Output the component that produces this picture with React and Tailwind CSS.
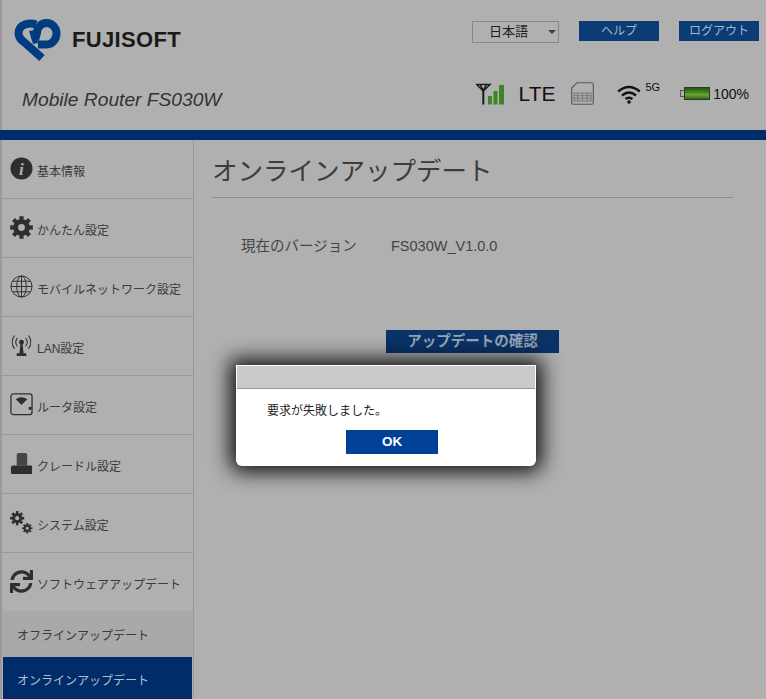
import React from "react";
import { FaSync } from "react-icons/fa";

const I = ({ children, vb = "0 0 24 24", cls = "w-[23px] h-[23px]" }) => (
  <svg viewBox={vb} className={cls + " shrink-0"} fill="#2e2e2e">{children}</svg>
);

const gearPath = (cx, cy, r1, r2, r3, n = 8) => {
  let d = "";
  const step = (Math.PI * 2) / n;
  for (let i = 0; i < n; i++) {
    const a = i * step;
    const w = step * 0.24;
    const p = (ang, r) => `${(cx + Math.cos(ang) * r).toFixed(2)} ${(cy + Math.sin(ang) * r).toFixed(2)}`;
    d += (i === 0 ? "M" : "L") + p(a - w * 1.25, r2) + "L" + p(a - w, r1) + "L" + p(a + w, r1) + "L" + p(a + w * 1.25, r2);
  }
  d += "Z";
  d += `M${cx + r3} ${cy}A${r3} ${r3} 0 1 0 ${cx - r3} ${cy}A${r3} ${r3} 0 1 0 ${cx + r3} ${cy}Z`;
  return d;
};

const icons = {
  info: (
    <I>
      <circle cx="12" cy="12" r="11.500" />
      <text x="12" y="18.500" textAnchor="middle" fontSize="18" fontStyle="italic" fontWeight="700" fontFamily="'Liberation Serif', serif" fill="#b0b0b0">i</text>
    </I>
  ),
  gear: <I><path fillRule="evenodd" d={gearPath(12, 12, 12, 8.800, 3.600)} /></I>,
  globe: (
    <I>
      <g fill="none" stroke="#2e2e2e" strokeWidth="1">
        <circle cx="12" cy="12" r="11" />
        <ellipse cx="12" cy="12" rx="5" ry="11" />
        <path d="M12 1V23M1 12H23M2.800 6.500H21.200M2.800 17.500H21.200" />
      </g>
    </I>
  ),
  antenna: (
    <I>
      <circle cx="12" cy="8.500" r="2.500" />
      <path d="M11 10h2l1.200 10H17v3H7V20h2.800z" />
      <g fill="none" stroke="#2e2e2e" strokeWidth="1.100" strokeLinecap="round">
        <path d="M7.500 4.500a6.500 6.500 0 0 0 0 8M16.500 4.500a6.500 6.500 0 0 1 0 8M4.500 2a11 11 0 0 0 0 13M19.500 2a11 11 0 0 1 0 13" />
      </g>
    </I>
  ),
  router: (
    <I>
      <rect x="1" y="1" width="22" height="21.500" rx="2.500" fill="none" stroke="#2e2e2e" strokeWidth="1.300" />
      <path d="M6 6.500Q12 2.500 18 6.500L12 12.500Z" />
      <rect x="19.500" y="14.500" width="3" height="3" />
    </I>
  ),
  cradle: (
    <I>
      <path d="M7 3Q7 1 9 1H16Q18 1 18 3V14H7Z" fill="#454545" />
      <path d="M3 14H22Q23 14 23 15.500V23H2Q1 23 1 21.500V16.500Q1 14 3 14Z" />
    </I>
  ),
  system: (
    <I>
      <path fillRule="evenodd" d={gearPath(7.500, 7.500, 7.500, 5.300, 2.200)} />
      <path fillRule="evenodd" d={gearPath(18, 18, 5.500, 3.900, 1.600)} />
    </I>
  ),
  refresh: <FaSync className="w-[23px] h-[23px] shrink-0 text-[#2e2e2e]" />,
};

const items = [
  ["info", "基本情報"],
  ["gear", "かんたん設定"],
  ["globe", "モバイルネットワーク設定"],
  ["antenna", "LAN設定"],
  ["router", "ルータ設定"],
  ["cradle", "クレードル設定"],
  ["system", "システム設定"],
  ["refresh", "ソフトウェアアップデート"],
];

function Logo() {
  return (
    <svg viewBox="0 0 47 43" className="w-[47px] h-[43px] shrink-0">
      <g fill="none" stroke="#003c80" strokeWidth="8">
        <path d="M22 5.500C17 3.500 4.500 4 4.500 14.500C4.500 18.500 7 20.500 10 23L28 39" />
        <path d="M24 25.500H33C38.500 25.500 42.500 20 42.500 14.500C42.500 8.500 38 4 32.500 4C27 4 23 8.500 23 14L21 21" />
      </g>
      <path fill="#003c80" d="M15 12L22 11L24 24L19 25Z" />
    </svg>
  );
}

function Signal() {
  return (
    <svg viewBox="0 0 29 22" className="w-[29px] h-[22px]">
      <g fill="none" stroke="#1a1a1a" strokeWidth="1.500">
        <path d="M0.500 1.500H14L7.300 8ZM4 1.500L7.300 7.500L10.500 1.500" />
        <path d="M7.300 7V21.500" strokeWidth="2" />
      </g>
      <rect x="12" y="13" width="4" height="8.500" fill="#3f8428" />
      <rect x="17.500" y="8" width="4" height="13.500" fill="#3f8428" />
      <rect x="23" y="2" width="5" height="19.500" fill="#3f8428" />
    </svg>
  );
}

function Sim() {
  return (
    <svg viewBox="0 0 23 23" className="w-[23px] h-[23px]">
      <path d="M6 .7H20.500Q22.300 .7 22.300 2.500V20.500Q22.300 22.300 20.500 22.300H2.500Q.7 22.300 .7 20.500V6Z" fill="none" stroke="#555" strokeWidth="1.100" />
      <g fill="none" stroke="#6a6a6a" strokeWidth=".8">
        <rect x="3" y="11" width="17" height="8" />
        <path d="M3 13.700H20M3 16.300H20M7 11V19M11.500 11V19M16 11V19" />
      </g>
    </svg>
  );
}

function Wifi() {
  return (
    <svg viewBox="0 0 24 20" className="w-6 h-5">
      <g fill="none" stroke="#111" strokeWidth="2.400">
        <path d="M1.200 7.500Q12 -1.500 22.800 7.500" />
        <path d="M5 11.500Q12 5.500 19 11.500" />
        <path d="M8.500 15Q12 12.300 15.500 15" />
      </g>
      <circle cx="12" cy="18" r="1.800" fill="#111" />
    </svg>
  );
}

function Battery() {
  return (
    <div className="flex items-center">
      <div className="w-[4px] h-[7px] border border-[#555] border-r-0" />
      <div className="w-[26px] h-[13px] border border-[#333] bg-[linear-gradient(#1f5a08,#4d8f22_45%,#6aa83a_60%,#2a6a10)]" />
    </div>
  );
}

export default function App() {
  return (
    <div className="relative w-[766px] h-[699px] overflow-hidden bg-[#b0b0b0] text-[#333] font-['Liberation_Sans','Noto_Sans_CJK_JP',sans-serif]">
      <div className="h-[130px] border-l-2 border-[#999] flex justify-between">
        <div className="pl-3 flex flex-col">
          <div className="flex items-center gap-[11px] pt-[19px]">
            <Logo />
            <span className="text-[22px] leading-none font-bold tracking-[0.35px] text-[#1a1a1a] -mt-[2px]">FUJISOFT</span>
          </div>
          <div className="pl-2 mt-[26px] text-[19.200px] leading-[24px] italic text-[#333]">Mobile Router FS030W</div>
        </div>
        <div className="flex flex-col items-end pr-[7px]">
          <div className="flex items-start pt-[21px] gap-5">
            <div className="w-[87px] h-[22px] border border-[#888] flex items-center pl-4 text-[13px] text-[#222]">
              日本語
              <span className="ml-5 w-0 h-0 border-x-[4px] border-x-transparent border-t-[4px] border-t-[#444]" />
            </div>
            <div className="w-[80px] h-5 bg-[#0c3c76] text-[#a9b4c2] text-xs leading-5 text-center">ヘルプ</div>
            <div className="w-[80px] h-5 bg-[#0c3c76] text-[#a9b4c2] text-xs leading-5 text-center">ログアウト</div>
          </div>
          <div className="flex items-center mt-[39px] mr-[10px] text-[#111]">
            <Signal />
            <span className="ml-[14px] text-[21px] leading-none">LTE</span>
            <span className="ml-[15px]"><Sim /></span>
            <span className="ml-[23px]"><Wifi /></span>
            <span className="ml-[5px] text-[11px] leading-none self-start">5G</span>
            <span className="ml-[20px]"><Battery /></span>
            <span className="ml-[3px] text-[14px] leading-none">100%</span>
          </div>
        </div>
      </div>
      <div className="h-[10px] bg-[#002c6a]" />
      <div className="flex">
        <nav className="w-[194px] h-[559px] border-l-2 border-r border-[#999] shrink-0">
          {items.map(([k, t], idx) => (
            <div key={k} className={idx === 7 ? "h-[58px] flex items-center pl-2 gap-[4px] text-xs text-[#3a3a3a]" : "h-[59px] border-b border-[#999] flex items-center pl-2 gap-[4px] text-xs text-[#3a3a3a]"}>
              <div className="-mt-[2px] flex">{icons[k]}</div>
              <span className="mt-[5px]">{t}</span>
            </div>
          ))}
          <div className="h-[46px] bg-[#a9a9a9] pl-[15px] pt-[4px] flex items-center text-xs text-[#3a3a3a]">オフラインアップデート</div>
          <div className="h-[42px] mx-px bg-[#002c6a] pl-[14px] pt-[6px] flex items-center text-xs text-[#b4bdcb]">オンラインアップデート</div>
        </nav>
        <main className="flex-1 pl-[18px] pr-[33px]">
          <h1 className="h-[58px] border-b border-[#8e8e8e] pt-[12px] text-[25.500px] leading-[38px] text-[#3c3c3c] font-normal">オンラインアップデート</h1>
          <div className="flex pl-[29px] mt-[38px] text-[14.500px] leading-5 text-[#444]">
            <span className="w-[150px]">現在のバージョン</span>
            <span>FS030W_V1.0.0</span>
          </div>
          <div className="pl-[174px] mt-[74px]">
            <div className="w-[173px] h-[23px] bg-[#0a3368] text-[#98a4b5] text-[14.500px] font-bold leading-[23px] text-center">アップデートの確認</div>
          </div>
        </main>
      </div>
      <div className="absolute left-[236px] top-[365px] w-[300px] h-[101px] bg-white rounded-b-[6px] shadow-[0_0_20px_6px_rgba(0,0,0,0.9)] border-t border-x border-white">
        <div className="h-[23px] bg-[#cacaca] border-b border-[#999]" />
        <div className="pl-[30px] pt-[14px] text-xs leading-[16px] text-[#222]">要求が失敗しました。</div>
        <div className="mt-[11px] ml-[109px] w-[92px] h-6 bg-[#004097] text-white text-[13.500px] font-bold leading-6 text-center">OK</div>
      </div>
    </div>
  );
}
